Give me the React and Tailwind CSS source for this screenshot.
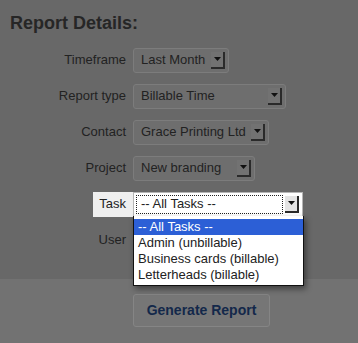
import React from 'react';

const FONT = { fontFamily: '"Liberation Sans", Arial, sans-serif' };

function Arrow({ light }) {
  return (
    <span
      className={`flex h-[17px] w-[14px] items-center justify-center border-r-2 border-b-2 ${
        light ? 'border-[#2a2a2a] bg-[#e4e4e4]' : 'border-[#2a2a2a] bg-[#727272]'
      }`}
    >
      <svg width="7" height="4" viewBox="0 0 7 4">
        <path d="M0 0h7L3.5 4z" fill="#111" />
      </svg>
    </span>
  );
}

function Select({ value, width }) {
  return (
    <div
      className="flex h-[25px] items-center justify-between rounded-[3px] border border-[#7c7c7c] bg-[#6e6e6e] pl-[7px] pr-[3px] text-[13px] text-[#222]"
      style={{ width }}
    >
      <span>{value}</span>
      <Arrow />
    </div>
  );
}

const ROWS = [
  { label: 'Timeframe', value: 'Last Month', width: 96 },
  { label: 'Report type', value: 'Billable Time', width: 153 },
  { label: 'Contact', value: 'Grace Printing Ltd', width: 136 },
  { label: 'Project', value: 'New branding', width: 122 },
];

const TASKS = ['Admin (unbillable)', 'Business cards (billable)', 'Letterheads (billable)'];

export default function App() {
  return (
    <div className="h-[343px] w-[358px] overflow-hidden bg-[#727272]" style={FONT}>
      <div className="h-[279px] bg-[#686868] pt-[11px]">
        <h2 className="pl-[10px] text-[18px] font-bold leading-[24px] text-[#262626]">Report Details:</h2>
        <div className="mt-[7px]">
          {ROWS.map((r) => (
            <div key={r.label} className="flex h-[36px] items-center">
              <span className="w-[133px] pr-[7px] text-right text-[13px] text-[#222]">{r.label}</span>
              <Select value={r.value} width={r.width} />
            </div>
          ))}

          <div className="relative flex h-[36px] items-center">
            <div className="flex w-[133px] justify-end">
              <span className="flex h-[25px] items-center bg-[#efefef] pl-[6px] pr-[7px] text-[13px] text-[#222]">
                Task
              </span>
            </div>
            <div className="flex h-[25px] w-[170px] items-center border border-[#b5b5b5] bg-white pl-[2px] pr-[3px]">
              <span className="flex h-[19px] flex-1 items-center border border-dotted border-[#222] pl-[4px] text-[13px] text-[#222]">
                -- All Tasks --
              </span>
              <span className="ml-[2px]">
                <Arrow light />
              </span>
            </div>
            <div className="absolute left-[133px] top-[30px] z-10 w-[171px] border border-t-0 border-[#111] bg-white pb-[2px] text-[13px] leading-[16px] text-[#222] shadow-[2px_3px_6px_rgba(0,0,0,0.45)]">
              <div className="mt-[3px] bg-[#2c5fd6] pl-[4px] text-white">-- All Tasks --</div>
              {TASKS.map((t) => (
                <div key={t} className="pl-[4px]">{t}</div>
              ))}
            </div>
          </div>

          <div className="flex h-[36px] items-center">
            <span className="w-[133px] pr-[7px] text-right text-[13px] text-[#222]">User</span>
          </div>
        </div>
      </div>

      <div className="pl-[133px] pt-[15px]">
        <button className="h-[33px] w-[137px] rounded-[3px] border border-[#858585] bg-[#767676] text-[14px] font-bold text-[#13284a]">
          Generate Report
        </button>
      </div>
    </div>
  );
}
